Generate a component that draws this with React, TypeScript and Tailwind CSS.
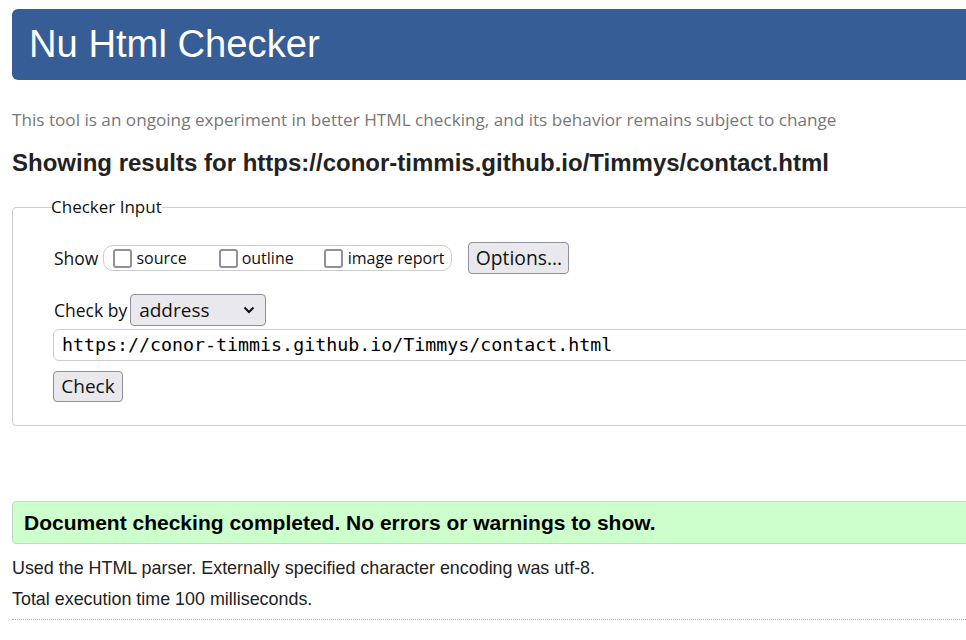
export default function App() {
  const sans = { fontFamily: '"Liberation Sans", Arial, sans-serif' };
  return (
    <div className="w-[966px] h-[640px] overflow-hidden bg-white" style={sans}>
      <div className="w-[1010px] pl-3 pt-[9px]">
        <header className="h-[71px] rounded-md bg-[#365d95] pl-[17px] flex items-center">
          <h1 className="text-[38.2px] text-white leading-none">Nu Html Checker</h1>
        </header>

        <p className="mt-[28px] text-[17.15px] leading-6 text-[#777] font-['Open_Sans',sans-serif] whitespace-nowrap">
          This tool is an ongoing experiment in better HTML checking, and its behavior remains subject to change
        </p>

        <h2 className="mt-[17px] text-[24px] leading-7 font-bold text-[#222] whitespace-nowrap">
          Showing results for https://conor-timmis.github.io/Timmys/contact.html
        </h2>

        <fieldset className="mt-[20px] h-[229px] border border-[#ccc] rounded pl-[41px] font-['Open_Sans',sans-serif] text-[#111]">
          <legend className="-ml-[3px] text-[17px] leading-5">Checker Input</legend>

          <div className="mt-[25px] flex items-center h-8">
            <span className="text-[17.5px]">Show</span>
            <div className="ml-[5px] h-[26px] w-[349px] border border-[#ccc] rounded-[10px] flex items-center pl-[9px] text-[16px]">
              <Box />
              <span className="ml-[4px]">source</span>
              <span className="ml-[32px]"><Box /></span>
              <span className="ml-[4px]">outline</span>
              <span className="ml-[30px]"><Box /></span>
              <span className="ml-[5px]">image report</span>
            </div>
            <button className="ml-[16px] h-8 w-[101px] rounded border border-[#8f8f9d] bg-[#e9e9ed] text-[19.3px] leading-none">
              Options...
            </button>
          </div>

          <div className="mt-[20px] flex items-center h-8">
            <span className="text-[17.5px]">Check by</span>
            <div className="ml-[3px] h-8 w-[136px] rounded border border-[#8f8f9d] bg-[#e9e9ed] flex items-center justify-between pl-[8px] pr-[10px]">
              <span className="text-[19px] leading-none">address</span>
              <svg width="12" height="8" viewBox="0 0 12 8" fill="none" stroke="#111" strokeWidth="2">
                <path d="M1.5 1.5l4.5 4.5 4.5-4.5" />
              </svg>
            </div>
          </div>

          <div className="mt-[3px] -ml-px h-8 w-[960px] border border-[#ccc] rounded-md flex items-center pl-[8px]">
            <span className="text-[18.3px] text-black font-['DejaVu_Sans_Mono',monospace]">
              https://conor-timmis.github.io/Timmys/contact.html
            </span>
          </div>

          <button className="mt-[10px] -ml-px h-[31px] w-[70px] rounded border border-[#8f8f9d] bg-[#e9e9ed] text-[19px] leading-none">
            Check
          </button>
        </fieldset>

        <div className="mt-[75px] h-[43px] rounded border border-[#c4d8c4] bg-[#ccffcc] flex items-center pl-[11px]">
          <span className="text-[21px] font-bold text-black">Document checking completed. No errors or warnings to show.</span>
        </div>

        <p className="mt-[13px] text-[17.9px] leading-[22px] text-[#222]">
          Used the HTML parser. Externally specified character encoding was utf-8.
        </p>
        <p className="mt-[9px] text-[17.9px] leading-[22px] text-[#222]">Total execution time 100 milliseconds.</p>
        <div className="mt-[9px] border-t border-dotted border-[#aaa]" />
      </div>
    </div>
  );
}

function Box() {
  return <span className="block w-[19px] h-[19px] rounded-[3px] border-2 border-[#8f8f9d] bg-white" />;
}
